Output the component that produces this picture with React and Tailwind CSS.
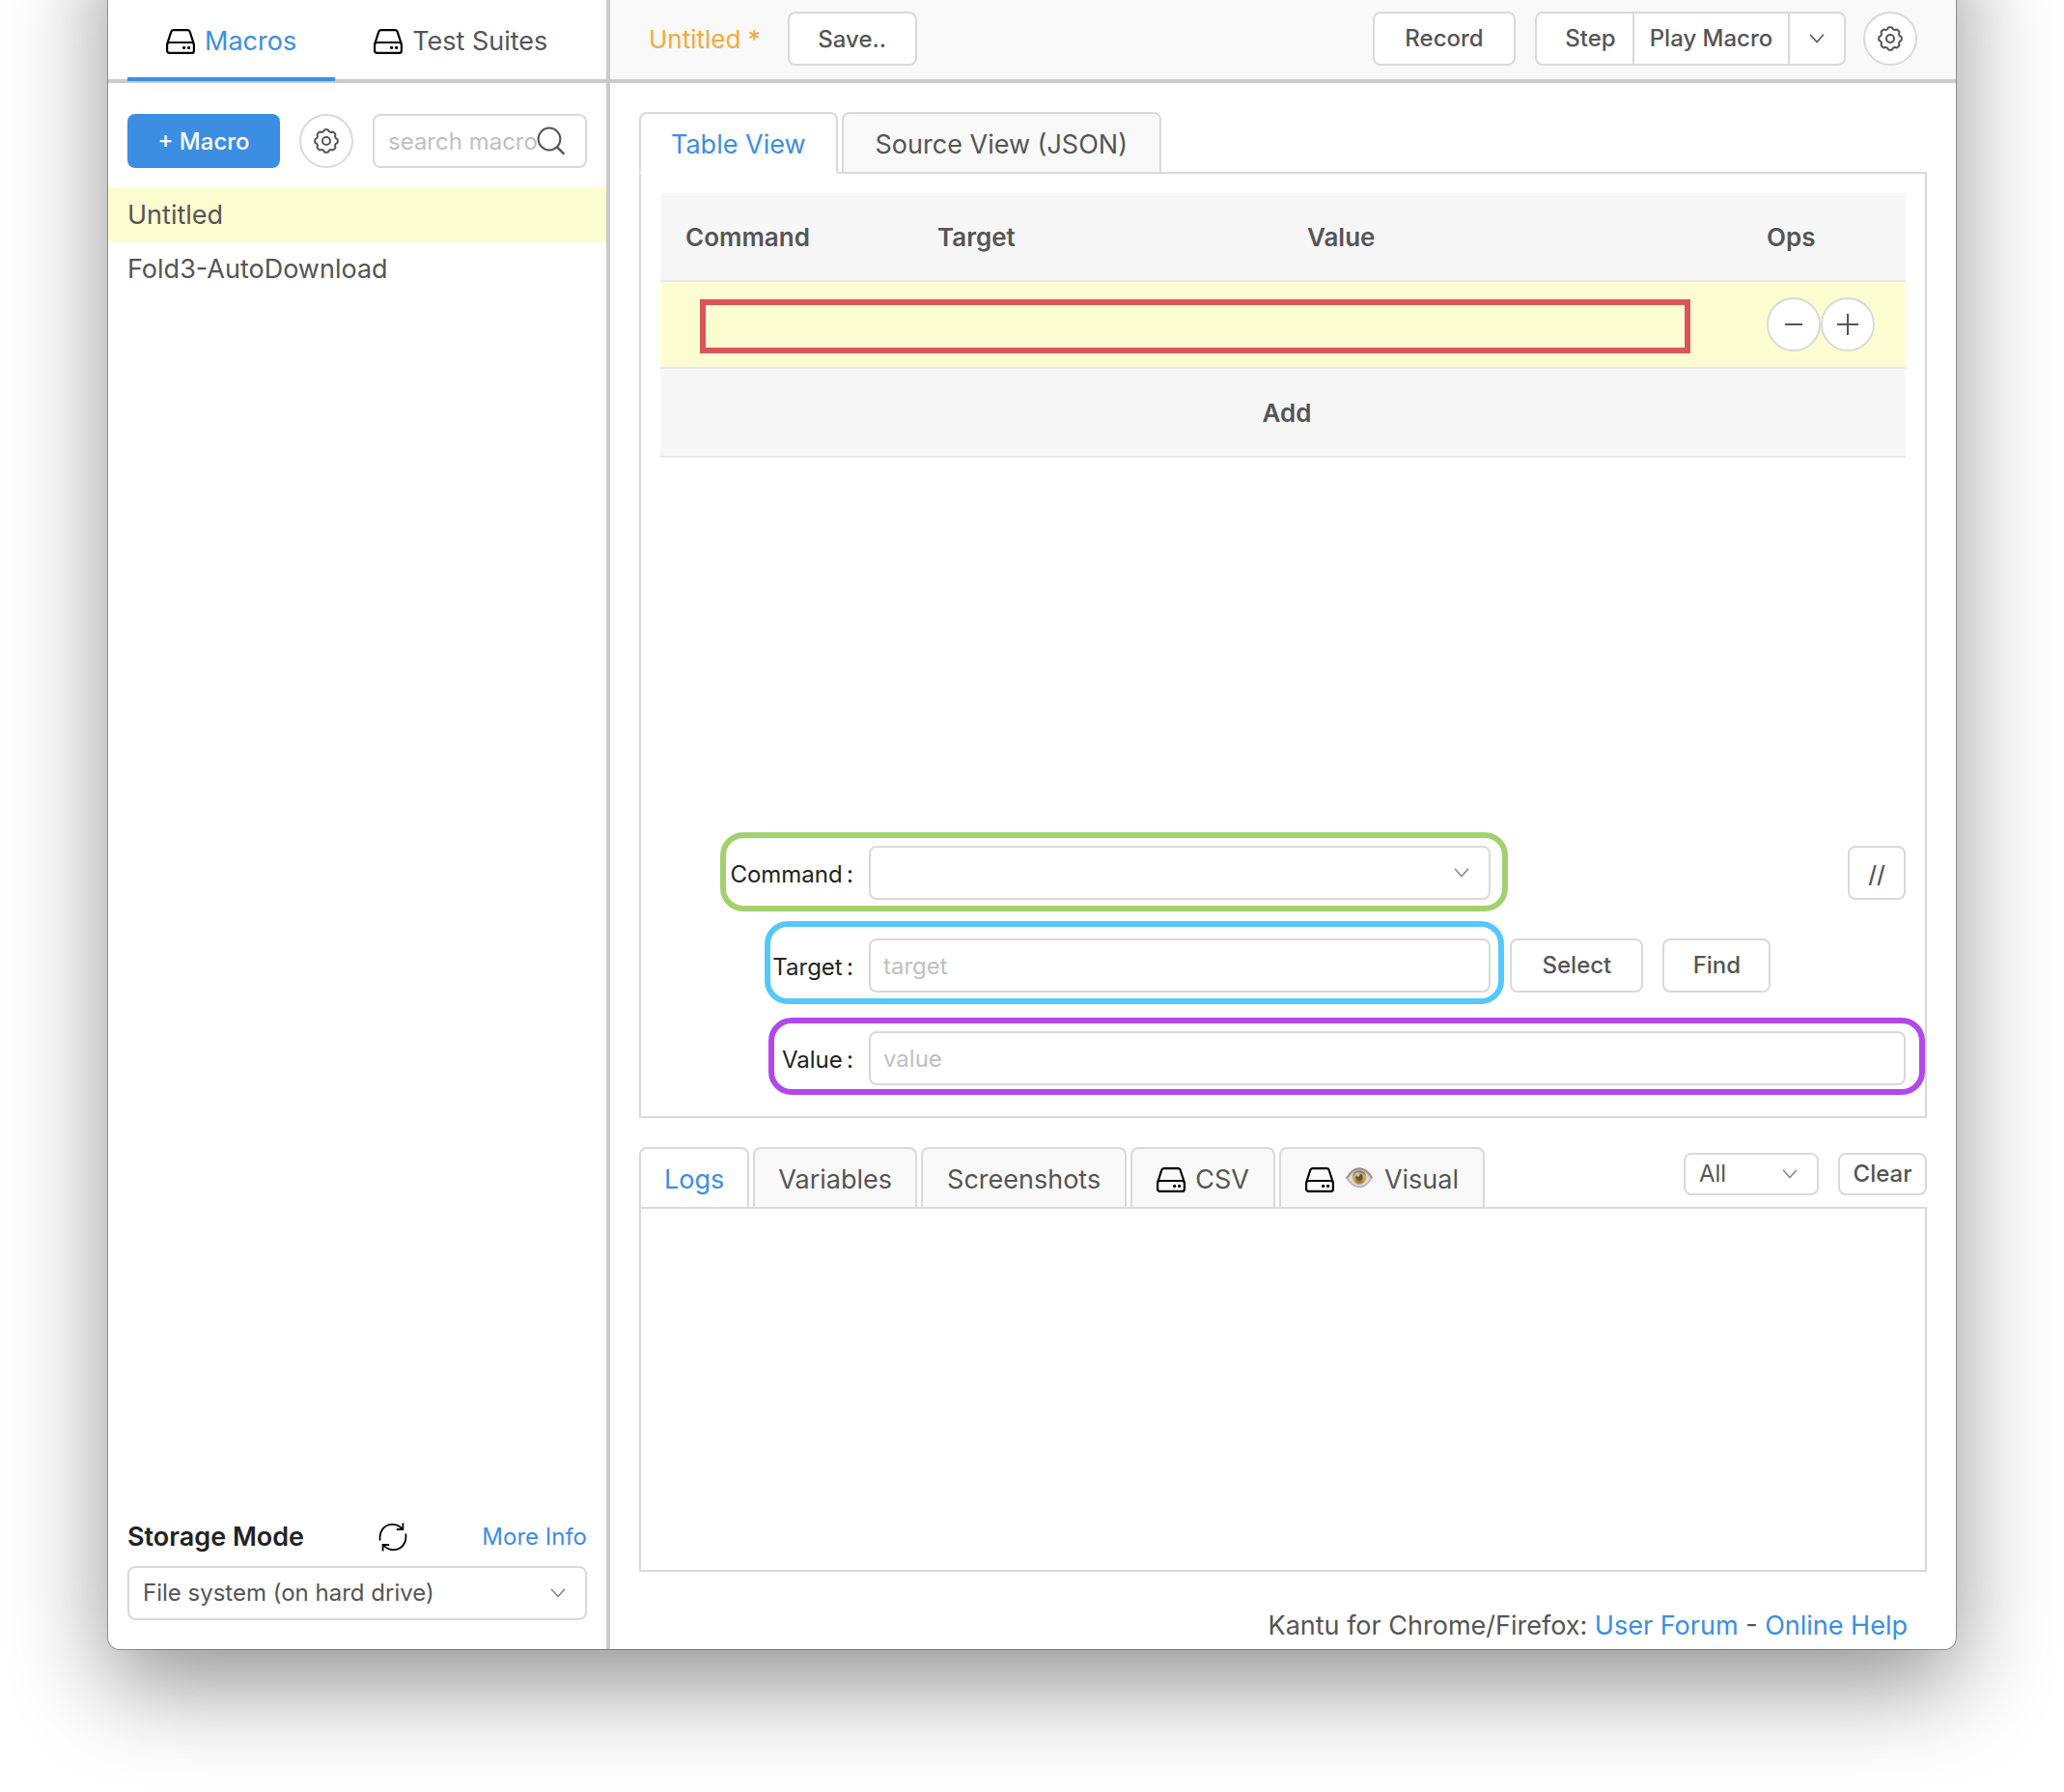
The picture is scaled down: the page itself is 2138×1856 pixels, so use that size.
import React from "react";
import clsx from "clsx";

/* ---------- icons ---------- */

function DriveIcon() {
  return (
    <svg width="30" height="26" viewBox="0 0 30 26" fill="none" stroke="#000" strokeWidth="2.2" strokeLinejoin="round" className="shrink-0" aria-hidden="true">
      <path d="M1.4 15 5.2 3.2Q5.8 1.2 7.6 1.2H22.4Q24.2 1.2 24.8 3.2L28.6 15" />
      <path d="M3.6 14H26.4Q28.9 14 28.900 16.4V22.4Q28.9 24.9 26.4 24.9H3.6Q1.1 24.9 1.1 22.4V16.4Q1.1 14 3.6 14Z" />
      <circle cx="18.6" cy="19.4" r="1.6" fill="#000" stroke="none" />
      <circle cx="23.6" cy="19.4" r="1.6" fill="#000" stroke="none" />
    </svg>
  );
}

const GEAR_PATH =
  Array.from({ length: 96 }, (_, i) => {
    const a = (i / 96) * Math.PI * 2;
    const r = 10.9 + 0.9 * Math.tanh(2.2 * (Math.cos(8 * a) + 0.25));
    return `${i ? "L" : "M"}${(13 + r * Math.sin(a)).toFixed(2)} ${(13 - r * Math.cos(a)).toFixed(2)}`;
  }).join("") + "Z";

function GearIcon() {
  return (
    <svg width="26" height="26" viewBox="0 0 26 26" fill="none" stroke="#555" strokeWidth="2" strokeLinejoin="round" aria-hidden="true">
      <path d={GEAR_PATH} />
      <circle cx="13" cy="13" r="4" />
    </svg>
  );
}

function SearchIcon() {
  return (
    <svg width="30" height="30" viewBox="0 0 30 30" fill="none" stroke="#555" strokeWidth="2" className="shrink-0" aria-hidden="true">
      <circle cx="13" cy="13" r="11.4" />
      <path d="M21 21.4 28.4 28.6" strokeWidth="2.4" />
    </svg>
  );
}

function ChevronIcon({ color = "#888" }) {
  return (
    <svg width="16" height="10" viewBox="0 0 16 10" fill="none" stroke={color} strokeWidth="1.5" aria-hidden="true">
      <path d="M1 .8 8 8.6 15 .8" />
    </svg>
  );
}

function RefreshIcon() {
  return (
    <svg width="30" height="30" viewBox="0 0 30 30" fill="none" stroke="#000" strokeWidth="1.8" aria-hidden="true">
      <path d="M1.8 18.5C.2 9 6 1.8 14.5 1.8c4 0 7.500 1.500 10 4.700M25.400.5V7h-6.600" />
      <path d="M28.200 11.500C29.800 21 24 28.200 15.500 28.200c-4 0-7.500-1.500-10-4.700M4.600 29.500V23h6.600" />
    </svg>
  );
}

function EyeIcon() {
  return (
    <svg width="28" height="22" viewBox="0 0 28 22" className="mb-1 shrink-0 self-center" aria-hidden="true">
      <defs>
        <radialGradient id="iris" cx=".5" cy=".7" r=".6">
          <stop offset="0" stopColor="#7a5f3c" />
          <stop offset=".5" stopColor="#c39a3a" />
          <stop offset=".8" stopColor="#dcb956" />
          <stop offset="1" stopColor="#8d7d68" />
        </radialGradient>
      </defs>
      <path d="M.5 11.500C5 4 9.500 1 14 1s9.500 3 13.500 10C23.500 18 19 21 14.500 21S5 18.500.5 11.500Z" fill="#b9adb0" />
      <path d="M2.500 11.800C6 6 10 3.500 14 3.500s8.500 2.700 11.500 8C22 17 18.500 19.300 14.500 19.300S6 17 2.500 11.800Z" fill="#e2dadd" />
      <path d="M.5 11.500C5 4 9.500 1 14 1s9.500 3 13.500 10" fill="none" stroke="#94878a" strokeWidth="1.300" />
      <circle cx="14" cy="10.500" r="7.300" fill="url(#iris)" />
      <circle cx="14" cy="10" r="3.600" fill="#5d5049" />
      <circle cx="12.500" cy="7.500" r="2.200" fill="#d9d0c8" opacity=".8" />
    </svg>
  );
}

/* ---------- shared controls ---------- */

const CONTROL = "border-2 border-[#d9d9d9] bg-white text-[#555]";

function Button({ className, children, ...rest }) {
  return (
    <button type="button" className={clsx(CONTROL, "h-14 rounded-lg text-2xl font-medium", className)} {...rest}>
      {children}
    </button>
  );
}

function RoundButton({ className, children, ...rest }) {
  return (
    <button type="button" className={clsx(CONTROL, "flex size-14 shrink-0 items-center justify-center rounded-full", className)} {...rest}>
      {children}
    </button>
  );
}

function Select({ className, selectClassName, chevronClassName, options, ...rest }) {
  return (
    <div className={clsx("relative", className)}>
      <select className={clsx(CONTROL, "w-full appearance-none rounded-lg pr-12 pl-3.5 text-2xl", selectClassName)} {...rest}>
        {options.map((o) => (
          <option key={o}>{o}</option>
        ))}
      </select>
      <span className={clsx("pointer-events-none absolute inset-y-0 flex items-center", chevronClassName)}>
        <ChevronIcon />
      </span>
    </div>
  );
}

function CardTab({ active, open, className, children }) {
  return (
    <button
      type="button"
      role="tab"
      aria-selected={!!active}
      className={clsx(
        "flex h-16 items-center rounded-t-lg border-2 border-[#d9d9d9] pt-1 text-[27px]",
        active ? "bg-white text-[#3b8ee2]" : "bg-[#f9f9f9] text-[#555]",
        open && "border-b-white",
        className
      )}
    >
      {children}
    </button>
  );
}

function FieldRow({ id, label, children }) {
  return (
    <div className="flex items-center">
      <label htmlFor={id} className="w-[216px] shrink-0 pt-1 pr-4 text-right text-2xl text-[#222]">
        {label}&thinsp;:
      </label>
      <div className="flex flex-1 items-center">{children}</div>
    </div>
  );
}

function Highlight({ className }) {
  return <div className={clsx("pointer-events-none absolute rounded-3xl border-6", className)} />;
}

/* ---------- sidebar ---------- */

function Sidebar() {
  return (
    <aside className="flex w-[520px] shrink-0 flex-col border-r-4 border-[#cbcbcb]">
      <div role="tablist" className="flex h-[86px] border-b-4 border-[#cbcbcb] px-5 text-[27px]">
        <button type="button" role="tab" aria-selected="true" className="relative flex items-center gap-2.5 px-10 pt-1 text-[#3b8ee2] after:absolute after:inset-x-0 after:-bottom-0.5 after:h-1 after:bg-[#3b8ee2]">
          <DriveIcon />
          Macros
        </button>
        <button type="button" role="tab" aria-selected="false" className="flex items-center gap-2.5 pt-1 pl-10 whitespace-nowrap text-[#555]">
          <DriveIcon />
          Test Suites
        </button>
      </div>

      <div className="flex gap-5 px-5 pt-8 pb-5">
        <button type="button" className="h-14 w-[158px] shrink-0 rounded-lg bg-[#3b8ee2] pt-0.5 text-2xl font-medium text-white">
          + Macro
        </button>
        <RoundButton aria-label="Macro settings">
          <GearIcon />
        </RoundButton>
        <div className={clsx(CONTROL, "flex h-14 min-w-0 flex-1 items-center rounded-lg pr-5 pl-3.5")}>
          <input type="text" aria-label="Search macros" placeholder="search macro" className="w-full min-w-0 pt-0.5 text-2xl outline-none placeholder:text-[#bfbfbf]" />
          <SearchIcon />
        </div>
      </div>

      <ul className="text-[27px] text-[#555]">
        <li className="flex h-14 items-center bg-[#fdfdd2] px-5 pt-0.5">Untitled</li>
        <li className="flex h-14 items-center px-5 pt-0.5">Fold3-AutoDownload</li>
      </ul>

      <div className="mt-auto px-5 pb-[30px]">
        <div className="mb-2.5 flex h-10 items-center justify-between">
          <label htmlFor="storage" className="text-[27px] font-semibold text-[#222]">
            Storage Mode
          </label>
          <button type="button" aria-label="Refresh">
            <RefreshIcon />
          </button>
          <a href="#more" className="text-2xl text-[#3b8ee2]">
            More Info
          </a>
        </div>
        <Select id="storage" options={["File system (on hard drive)"]} selectClassName="h-14" chevronClassName="right-[22px]" />
      </div>
    </aside>
  );
}

/* ---------- main area ---------- */

function Toolbar() {
  return (
    <header className="flex h-[86px] items-center border-b-4 border-[#cbcbcb] bg-[#f9f9f9] pr-10 pb-0.5 pl-10">
      <span className="text-[26px] text-[#f4a938]">Untitled *</span>
      <Button className="ml-7 w-[134px] pt-0.5">Save..</Button>
      <Button className="ml-auto w-[148px]">Record</Button>
      <div className="mr-[18px] ml-5 flex">
        <Button className="w-[103px] rounded-r-none pl-3">Step</Button>
        <Button className="-ml-0.5 w-[163px] rounded-none">Play Macro</Button>
        <Button className="-ml-0.5 flex w-[60px] items-center justify-center rounded-l-none" aria-label="More play options">
          <ChevronIcon color="#555" />
        </Button>
      </div>
      <RoundButton aria-label="Settings">
        <GearIcon />
      </RoundButton>
    </header>
  );
}

function CommandTable() {
  return (
    <table className="w-full table-fixed border-collapse text-left text-[26px] text-[#555]">
      <colgroup>
        <col className="w-[261px]" />
        <col className="w-[383px]" />
        <col />
        <col className="w-[170px]" />
      </colgroup>
      <thead>
        <tr className="h-[91px] border-b-2 border-[#e8e8e8] bg-[#f7f7f7]">
          {["Command", "Target", "Value", "Ops"].map((h) => (
            <th key={h} scope="col" className="px-[26px] font-semibold">
              {h}
            </th>
          ))}
        </tr>
      </thead>
      <tbody>
        <tr className="h-[90px] border-b-2 border-[#e8e8e8] bg-[#fdfdd2]">
          <td colSpan={3} className="relative">
            <div className="pointer-events-none absolute top-[18px] right-[53px] bottom-3.5 left-[41px] border-6 border-[#da5558]" />
          </td>
          <td className="pl-[26px]">
            <div className="flex">
              <RoundButton aria-label="Remove row">
                <svg width="22" height="22" viewBox="0 0 22 22" stroke="#555" strokeWidth="2" aria-hidden="true">
                  <path d="M2 11H20" />
                </svg>
              </RoundButton>
              <RoundButton aria-label="Insert row">
                <svg width="22" height="22" viewBox="0 0 22 22" stroke="#555" strokeWidth="2" aria-hidden="true">
                  <path d="M0 11H22M11 0V22" />
                </svg>
              </RoundButton>
            </div>
          </td>
        </tr>
        <tr className="h-[92px] border-b-2 border-[#e8e8e8] bg-[#f7f7f7]">
          <td colSpan={4} className="p-0">
            <button type="button" className="block h-[90px] w-full pl-2 font-semibold">
              Add
            </button>
          </td>
        </tr>
      </tbody>
    </table>
  );
}

function CommandForm() {
  const input = clsx(CONTROL, "h-14 w-full rounded-lg px-[13px] text-2xl outline-none placeholder:text-[#bfbfbf]");
  return (
    <form className="mt-auto flex flex-col gap-10 pt-10">
      <FieldRow id="command" label="Command">
        <div className="relative w-3/5">
          <Select id="command" options={[""]} selectClassName="h-14" chevronClassName="right-[22px]" />
          <Highlight className="-top-3.5 -right-[18px] -bottom-3 -left-[154px] border-[#a3d16e]" />
        </div>
        <Button className="ml-auto w-[60px] pt-1">//</Button>
      </FieldRow>
      <FieldRow id="target" label="Target">
        <div className="relative w-3/5">
          <input id="target" type="text" placeholder="target" className={input} />
          <Highlight className="-top-[18px] -right-3.5 -bottom-3 -left-[108px] border-[#56c7fa]" />
        </div>
        <Button className="ml-5 w-[138px]">Select</Button>
        <Button className="ml-5 w-28">Find</Button>
      </FieldRow>
      <FieldRow id="value" label="Value">
        <div className="relative w-full">
          <input id="value" type="text" placeholder="value" className={input} />
          <Highlight className="-top-3.5 -right-5 -bottom-2.5 -left-[104px] border-[#b048ec]" />
        </div>
      </FieldRow>
    </form>
  );
}

function LogArea() {
  return (
    <section className="mt-[30px]">
      <div className="flex items-center justify-between">
        <div role="tablist" className="-mb-0.5 flex gap-1">
          <CardTab active className="px-6">Logs</CardTab>
          <CardTab className="px-6">Variables</CardTab>
          <CardTab className="px-[25px]">Screenshots</CardTab>
          <CardTab className="gap-2.5 px-[25px]">
            <DriveIcon />
            CSV
          </CardTab>
          <CardTab className="gap-3 px-[25px]">
            <DriveIcon />
            <EyeIcon />
            Visual
          </CardTab>
        </div>
        <div className="flex gap-5 pb-1.5">
          <Select aria-label="Log filter" options={["All"]} className="w-[140px]" selectClassName="h-11" chevronClassName="right-[22px]" />
          <button type="button" className={clsx(CONTROL, "h-11 w-[92px] rounded-lg text-2xl font-medium")}>
            Clear
          </button>
        </div>
      </div>
      <div className="min-h-[378px] border-2 border-[#d9d9d9]" />
    </section>
  );
}

export default function App() {
  return (
    <div className="flex min-h-screen flex-col overflow-hidden bg-white px-28 pb-[148px] font-['Inter','Liberation_Sans',sans-serif]">
      <div className="-mt-24 flex flex-1 overflow-hidden rounded-b-xl bg-white pt-24 shadow-[0_0_0_1px_rgba(0,0,0,0.3),0_36px_100px_rgba(0,0,0,0.43)]">
        <Sidebar />
        <main className="flex min-w-0 flex-1 flex-col">
          <Toolbar />
          <div className="flex flex-1 flex-col px-[30px] pt-[30px]">
            <div role="tablist" className="z-10 -mb-0.5 flex gap-1">
              <CardTab active open className="px-[31px]">Table View</CardTab>
              <CardTab className="px-[33px]">Source View (JSON)</CardTab>
            </div>
            <section className="flex flex-1 flex-col border-2 border-[#d9d9d9] px-5 pt-5 pb-8">
              <CommandTable />
              <CommandForm />
            </section>
            <LogArea />
            <footer className="px-5 pt-9 pb-1 text-right text-[27px] leading-10 text-[#555]">
              Kantu for Chrome/Firefox:{" "}
              <a href="#forum" className="text-[#3b8ee2]">User Forum</a> -{" "}
              <a href="#help" className="text-[#3b8ee2]">Online Help</a>
            </footer>
          </div>
        </main>
      </div>
    </div>
  );
}
